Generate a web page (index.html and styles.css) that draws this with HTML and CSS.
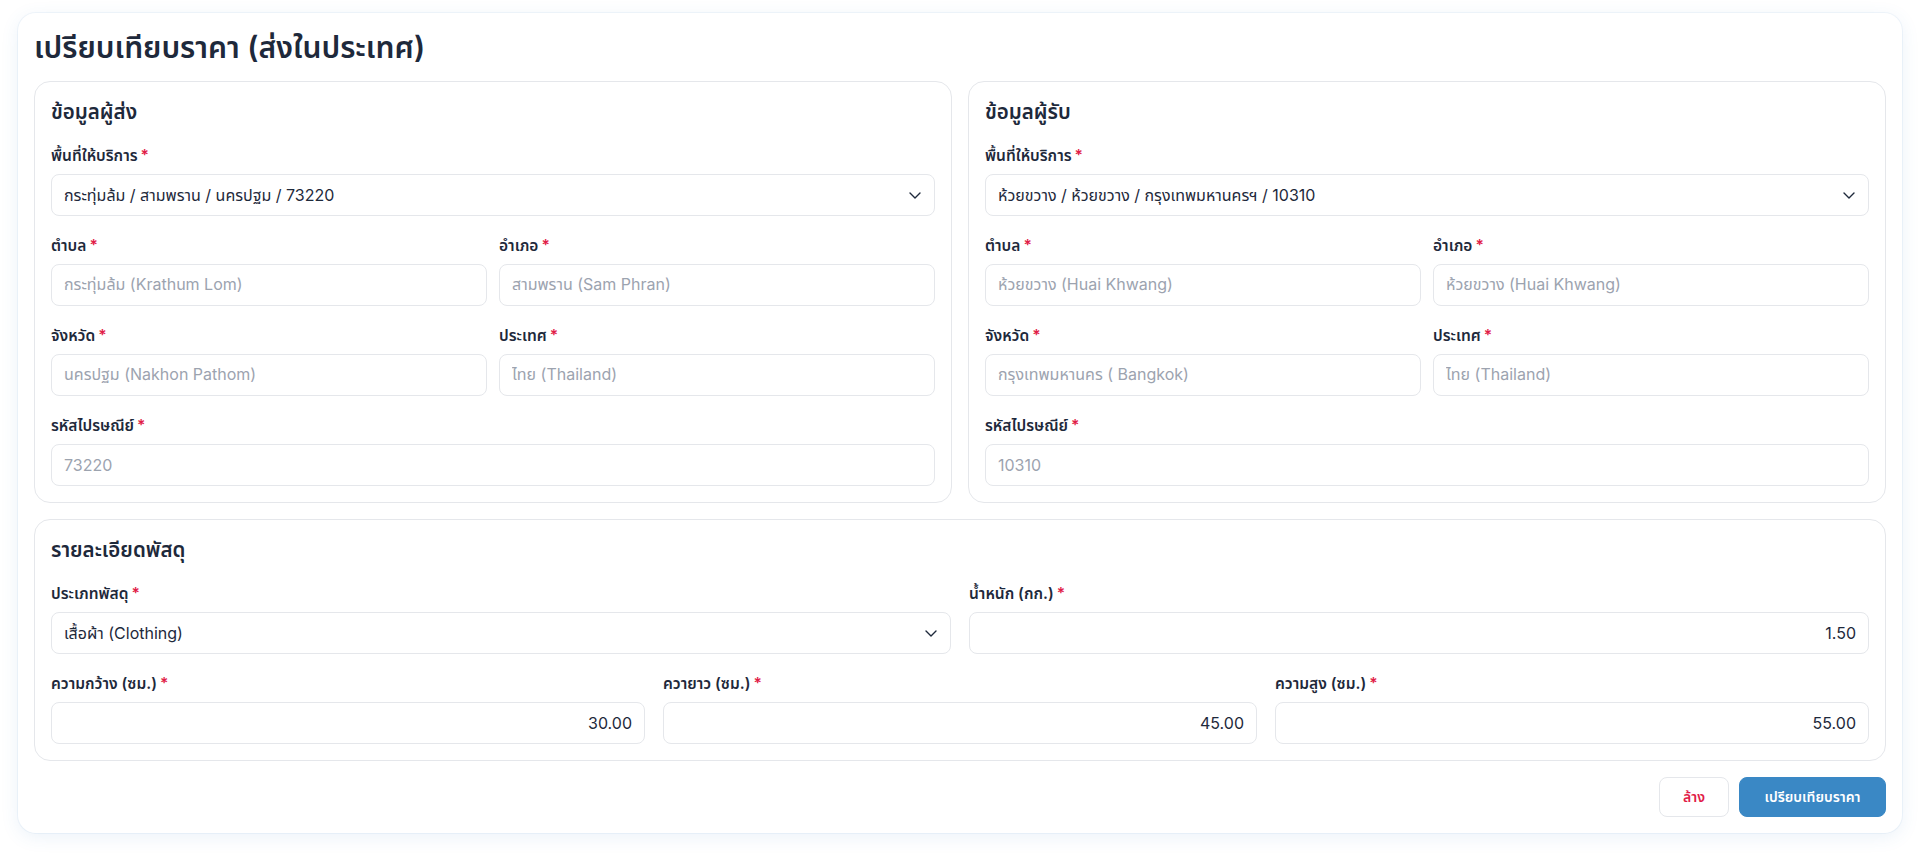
FILE: index.html
```html
<!DOCTYPE html>
<html lang="th">
  <head>
    <title>เปรียบเทียบราคา (ส่งในประเทศ)</title>
    <meta charset="utf-8" />
    <link rel="stylesheet" href="styles.css">
  </head>
  <body>
    <div class="page">
      <form class="card">
        <h1 class="title">เปรียบเทียบราคา (ส่งในประเทศ)</h1>

        <div class="address-row">
          <!-- sender -->
          <section class="panel">
            <h2 class="panel-title">ข้อมูลผู้ส่ง</h2>
            <div class="field">
              <label>พื้นที่ให้บริการ<span class="req">*</span></label>
              <div class="select-wrap">
                <select class="control">
                  <option>กระทุ่มล้ม / สามพราน / นครปฐม / 73220</option>
                </select>
                <svg class="chevron" viewBox="0 0 12 7" width="12" height="7"><path d="M1 1l5 5 5-5" fill="none" stroke="currentColor" stroke-width="1.4" stroke-linecap="round" stroke-linejoin="round"/></svg>
              </div>
            </div>
            <div class="grid-2">
              <div class="field">
                <label>ตำบล<span class="req">*</span></label>
                <input class="control" type="text" value="กระทุ่มล้ม (Krathum Lom)" disabled />
              </div>
              <div class="field">
                <label>อำเภอ<span class="req">*</span></label>
                <input class="control" type="text" value="สามพราน (Sam Phran)" disabled />
              </div>
              <div class="field">
                <label>จังหวัด<span class="req">*</span></label>
                <input class="control" type="text" value="นครปฐม (Nakhon Pathom)" disabled />
              </div>
              <div class="field">
                <label>ประเทศ<span class="req">*</span></label>
                <input class="control" type="text" value="ไทย (Thailand)" disabled />
              </div>
            </div>
            <div class="field">
              <label>รหัสไปรษณีย์<span class="req">*</span></label>
              <input class="control" type="text" value="73220" disabled />
            </div>
          </section>

          <!-- receiver -->
          <section class="panel">
            <h2 class="panel-title">ข้อมูลผู้รับ</h2>
            <div class="field">
              <label>พื้นที่ให้บริการ<span class="req">*</span></label>
              <div class="select-wrap">
                <select class="control">
                  <option>ห้วยขวาง / ห้วยขวาง / กรุงเทพมหานครฯ / 10310</option>
                </select>
                <svg class="chevron" viewBox="0 0 12 7" width="12" height="7"><path d="M1 1l5 5 5-5" fill="none" stroke="currentColor" stroke-width="1.4" stroke-linecap="round" stroke-linejoin="round"/></svg>
              </div>
            </div>
            <div class="grid-2">
              <div class="field">
                <label>ตำบล<span class="req">*</span></label>
                <input class="control" type="text" value="ห้วยขวาง (Huai Khwang)" disabled />
              </div>
              <div class="field">
                <label>อำเภอ<span class="req">*</span></label>
                <input class="control" type="text" value="ห้วยขวาง (Huai Khwang)" disabled />
              </div>
              <div class="field">
                <label>จังหวัด<span class="req">*</span></label>
                <input class="control" type="text" value="กรุงเทพมหานคร ( Bangkok)" disabled />
              </div>
              <div class="field">
                <label>ประเทศ<span class="req">*</span></label>
                <input class="control" type="text" value="ไทย (Thailand)" disabled />
              </div>
            </div>
            <div class="field">
              <label>รหัสไปรษณีย์<span class="req">*</span></label>
              <input class="control" type="text" value="10310" disabled />
            </div>
          </section>
        </div>

        <!-- parcel -->
        <section class="panel">
          <h2 class="panel-title">รายละเอียดพัสดุ</h2>
          <div class="parcel-grid cols-2">
            <div class="field">
              <label>ประเภทพัสดุ<span class="req">*</span></label>
              <div class="select-wrap">
                <select class="control">
                  <option>เสื้อผ้า (Clothing)</option>
                </select>
                <svg class="chevron" viewBox="0 0 12 7" width="12" height="7"><path d="M1 1l5 5 5-5" fill="none" stroke="currentColor" stroke-width="1.4" stroke-linecap="round" stroke-linejoin="round"/></svg>
              </div>
            </div>
            <div class="field">
              <label>น้ำหนัก (กก.)<span class="req">*</span></label>
              <input class="control num" type="text" value="1.50" />
            </div>
          </div>
          <div class="parcel-grid cols-3">
            <div class="field">
              <label>ความกว้าง (ซม.)<span class="req">*</span></label>
              <input class="control num" type="text" value="30.00" />
            </div>
            <div class="field">
              <label>ควายาว (ซม.)<span class="req">*</span></label>
              <input class="control num" type="text" value="45.00" />
            </div>
            <div class="field">
              <label>ความสูง (ซม.)<span class="req">*</span></label>
              <input class="control num" type="text" value="55.00" />
            </div>
          </div>
        </section>

        <div class="actions">
          <button type="reset" class="btn btn-clear">ล้าง</button>
          <button type="button" class="btn btn-primary">เปรียบเทียบราคา</button>
        </div>
      </form>
    </div>
  </body>
</html>
```

FILE: styles.css
```css
body {
	font-family: Inter, "Noto Sans Thai", "Noto Sans", sans-serif;
	font-size: 16px;
	margin: 0;
	padding: 0;
	color: #1e293b;
	background: #fff;
}

.page {
	padding: 13px 18px 20px;
}

/* Outer card */

.card {
	display: flex;
	flex-direction: column;
	gap: 16px;
	padding: 16px;
	background: #fff;
	border-radius: 18px;
	box-shadow: 0 4px 18px rgba(59, 130, 200, 0.10), 0 0 0 1px rgba(232, 240, 248, 0.5);
}

.title {
	margin: 0;
	font-size: 30px;
	line-height: 36px;
	font-weight: 600;
	color: #1e293b;
}

.address-row {
	display: grid;
	grid-template-columns: 1fr 1fr;
	gap: 16px;
}

/* Section panels */

.panel {
	display: flex;
	flex-direction: column;
	gap: 20px;
	padding: 16px;
	border: 1px solid #e5e7eb;
	border-radius: 16px;
}

.panel-title {
	margin: 0;
	font-size: 20.5px;
	line-height: 28px;
	font-weight: 600;
	color: #1e293b;
}

.grid-2 {
	display: grid;
	grid-template-columns: 1fr 1fr;
	gap: 20px 12px;
}

.parcel-grid {
	display: grid;
	gap: 20px 18px;
}

.parcel-grid.cols-2 {
	grid-template-columns: 1fr 1fr;
}

.parcel-grid.cols-3 {
	grid-template-columns: 1fr 1fr 1fr;
}

/* Fields */

.field {
	display: flex;
	flex-direction: column;
	gap: 8px;
	min-width: 0;
}

.field label {
	font-size: 15.5px;
	line-height: 20px;
	font-weight: 600;
	color: #1e293b;
}

.req {
	color: #e11d48;
	margin-left: 3px;
}

.control {
	box-sizing: border-box;
	width: 100%;
	height: 42px;
	padding: 0 12px;
	font: inherit;
	font-size: 16px;
	color: #1e293b;
	background: #fff;
	border: 1px solid #e5e7eb;
	border-radius: 8px;
	outline: none;
}

.control:disabled {
	color: #9ca3af;
	background: #fff;
	-webkit-text-fill-color: #9ca3af;
	opacity: 1;
}

.control.num {
	text-align: right;
}

.select-wrap {
	position: relative;
}

select.control {
	-webkit-appearance: none;
	appearance: none;
	padding-right: 36px;
}

.chevron {
	position: absolute;
	right: 14px;
	top: 18px;
	color: #1e293b;
	pointer-events: none;
}

/* Buttons */

.actions {
	display: flex;
	justify-content: flex-end;
	gap: 10px;
}

.btn {
	height: 40px;
	padding: 0 20px;
	font: inherit;
	font-size: 14px;
	font-weight: 600;
	border-radius: 8px;
	cursor: pointer;
}

.btn-clear {
	width: 70px;
	padding: 0;
	color: #e11d48;
	background: #fff;
	border: 1px solid #e5e7eb;
}

.btn-primary {
	width: 147px;
	padding: 0;
	color: #fff;
	background: #3a88c5;
	border: 1px solid #3a88c5;
}
```
